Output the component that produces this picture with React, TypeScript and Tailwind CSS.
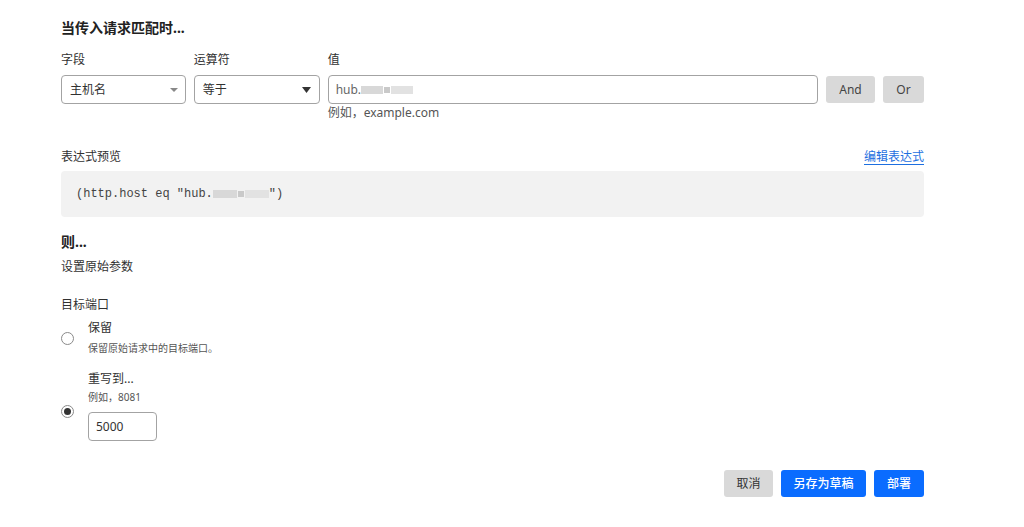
const font = { fontFamily: '"Noto Sans", "Noto Sans CJK SC", sans-serif' };

const Caret = ({ dark = false }: { dark?: boolean }) =>
  dark ? (
    <svg width="9" height="6" viewBox="0 0 9 6" className="text-[#333]">
      <path d="M0 0h9L4.5 6z" fill="currentColor" />
    </svg>
  ) : (
    <svg width="8" height="4" viewBox="0 0 8 4" className="text-[#888]">
      <path d="M0 0h8L4 4z" fill="currentColor" />
    </svg>
  );

const Radio = ({ checked }: { checked: boolean }) => (
  <span className="flex h-[13px] w-[13px] items-center justify-center rounded-full border border-[#8a8a8a] bg-white">
    {checked && <span className="h-[7px] w-[7px] rounded-full bg-[#333]" />}
  </span>
);

const Blur = ({ w }: { w: number }) => (
  <span className="inline-flex items-center gap-px align-middle" style={{ width: w }}>
    <span className="h-[8px] flex-1 bg-[#d8d8d8]" />
    <span className="h-[6px] w-[6px] bg-[#c9c9c9]" />
    <span className="h-[8px] flex-1 bg-[#e2e2e2]" />
  </span>
);

export default function App() {
  return (
    <div className="min-h-[527px] bg-white text-[#313131]" style={font}>
      <div className="ml-[61px] w-[863px] pt-[18px]">
        <h2 className="text-[14px] font-bold leading-[20px] text-[#222]">当传入请求匹配时...</h2>

        <div className="mt-[14px] flex items-start gap-[8px]">
          <div className="w-[125px]">
            <div className="text-[12px] leading-[16px]">字段</div>
            <div className="mt-[7px] flex h-[29px] items-center justify-between rounded-[4px] border border-[#a3a3a3] pl-[8px] pr-[7px] text-[12px]">
              <span>主机名</span>
              <Caret />
            </div>
          </div>
          <div className="w-[126px]">
            <div className="text-[12px] leading-[16px]">运算符</div>
            <div className="mt-[7px] flex h-[29px] items-center justify-between rounded-[4px] border border-[#a3a3a3] pl-[8px] pr-[8px] text-[12px]">
              <span>等于</span>
              <Caret dark />
            </div>
          </div>
          <div className="w-[491px]">
            <div className="text-[12px] leading-[16px]">值</div>
            <div className="mt-[7px] flex h-[29px] items-center rounded-[4px] border border-[#a3a3a3] pl-[7px] text-[12px] text-[#666]">
              <span>hub.</span>
              <Blur w={52} />
            </div>
            <div className="mt-[1px] text-[12px] leading-[16px] text-[#555]">例如，example.com</div>
          </div>
          <div className="mt-[24px] flex gap-[8px]">
            <button className="h-[27px] w-[49px] rounded-[3px] bg-[#d9d9d9] text-[12px] text-[#444]">And</button>
            <button className="h-[27px] w-[41px] rounded-[3px] bg-[#d9d9d9] text-[12px] text-[#444]">Or</button>
          </div>
        </div>

        <div className="mt-[28px] flex items-center justify-between text-[12px] leading-[16px]">
          <span>表达式预览</span>
          <a className="border-b border-[#1d6fe0] leading-[14px] text-[#1d6fe0]">编辑表达式</a>
        </div>
        <div
          className="mt-[6px] flex h-[46px] items-center rounded-[4px] bg-[#f2f2f2] px-[15px] text-[12px] text-[#444]"
          style={{ fontFamily: '"Liberation Mono", monospace' }}
        >
          <span>(http.host eq "hub.</span>
          <Blur w={56} />
          <span>")</span>
        </div>

        <h2 className="mt-[15px] text-[14px] font-bold leading-[20px] text-[#222]">则...</h2>
        <div className="mt-[7px] text-[12px] leading-[16px]">设置原始参数</div>

        <div className="mt-[22px] text-[12px] leading-[16px]">目标端口</div>

        <div className="mt-[7px] flex items-center gap-[14px]">
          <div className="pt-[1px]">
            <Radio checked={false} />
          </div>
          <div>
            <div className="text-[12px] leading-[16px]">保留</div>
            <div className="mt-[5px] text-[10px] leading-[14px] text-[#555]">保留原始请求中的目标端口。</div>
          </div>
        </div>

        <div className="mt-[16px] flex items-center gap-[14px]">
          <div className="pt-[10px]">
            <Radio checked />
          </div>
          <div>
            <div className="text-[12px] leading-[16px]">重写到...</div>
            <div className="mt-[3px] text-[10px] leading-[14px] text-[#555]">例如，8081</div>
            <div className="mt-[8px] flex h-[29px] w-[69px] items-center rounded-[4px] border border-[#a3a3a3] pl-[7px] text-[12px] text-[#333]">
              5000
            </div>
          </div>
        </div>

        <div className="mt-[29px] flex justify-end gap-[8px] text-[12px]">
          <button className="h-[27px] w-[49px] rounded-[3px] bg-[#d9d9d9] text-[#333]">取消</button>
          <button className="h-[27px] w-[85px] rounded-[3px] bg-[#0a6cff] font-medium text-white">另存为草稿</button>
          <button className="h-[27px] w-[50px] rounded-[3px] bg-[#0a6cff] font-medium text-white">部署</button>
        </div>
      </div>
    </div>
  );
}
